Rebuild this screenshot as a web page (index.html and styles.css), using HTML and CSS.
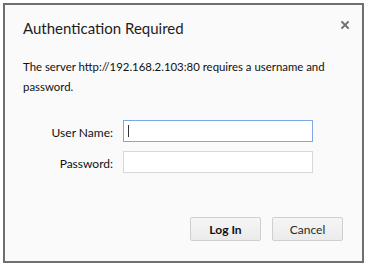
FILE: index.html
```html
<!DOCTYPE html>
<html>
<head>
<meta charset="utf-8">
<link rel="stylesheet" href="styles.css">
</head>
<body>
<div class="dialog">
  <div class="header">
    <h1 class="title">Authentication Required</h1>
    <svg class="close" width="8" height="8" viewBox="0 0 8 8"><path d="M1 1L7 7M7 1L1 7" stroke="#6f6f6f" stroke-width="1.9" stroke-linecap="square"/></svg>
  </div>
  <p class="message">The server http://192.168.2.103:80 requires a username and password.</p>
  <div class="form">
    <label class="label">User Name:</label>
    <div class="input focused"><span class="caret"></span></div>
    <label class="label">Password:</label>
    <div class="input"></div>
  </div>
  <div class="buttons">
    <button class="btn primary">Log In</button>
    <button class="btn">Cancel</button>
  </div>
</div>
</body>
</html>
```
FILE: styles.css
```css
html, body {
  margin: 0;
  padding: 0;
  background: #ffffff;
}
body {
  font-family: "Lato", "Open Sans", sans-serif;
  color: #1a1a1a;
}
.dialog {
  box-sizing: border-box;
  margin: 3px 0 0 3px;
  width: 361px;
  height: 260px;
  border: 2px solid #6f6f6f;
  background: #fafafa;
  display: flex;
  flex-direction: column;
  padding: 0 19px 0 18px;
}
.header {
  display: flex;
  justify-content: space-between;
  align-items: flex-start;
  padding-top: 13px;
}
.title {
  margin: 0;
  font-size: 15px;
  font-weight: normal;
  line-height: 20px;
  color: #1e1e1e;
}
.close {
  margin-top: 3px;
  margin-right: -6px;
}
.message {
  margin: 19px 0 0 0;
  max-width: 312px;
  font-size: 11.4px;
  line-height: 20px;
  color: #111;
}
.form {
  margin-top: 23px;
  display: grid;
  grid-template-columns: 90px 190px;
  column-gap: 10px;
  row-gap: 9px;
  align-items: center;
}
.label {
  text-align: right;
  font-size: 12px;
  color: #111;
  padding-top: 2px;
}
.input {
  box-sizing: border-box;
  height: 22px;
  border: 1px solid #d8d8d8;
  background: #ffffff;
  display: flex;
  align-items: center;
  padding-left: 4px;
}
.input.focused {
  border: 1px solid #7fa6ea;
}
.caret {
  width: 1px;
  height: 12px;
  background: #333;
}
.buttons {
  margin-top: auto;
  margin-bottom: 20px;
  display: flex;
  justify-content: flex-end;
  gap: 11px;
}
.btn {
  box-sizing: border-box;
  width: 71px;
  height: 24px;
  border: 1px solid #cfcfcf;
  border-radius: 2px;
  background: linear-gradient(#f6f6f6, #ebebeb);
  font-family: "Lato", "Open Sans", sans-serif;
  font-size: 12px;
  color: #2a2a2a;
  padding: 0;
}
.btn.primary {
  font-weight: bold;
  color: #111;
}
```
